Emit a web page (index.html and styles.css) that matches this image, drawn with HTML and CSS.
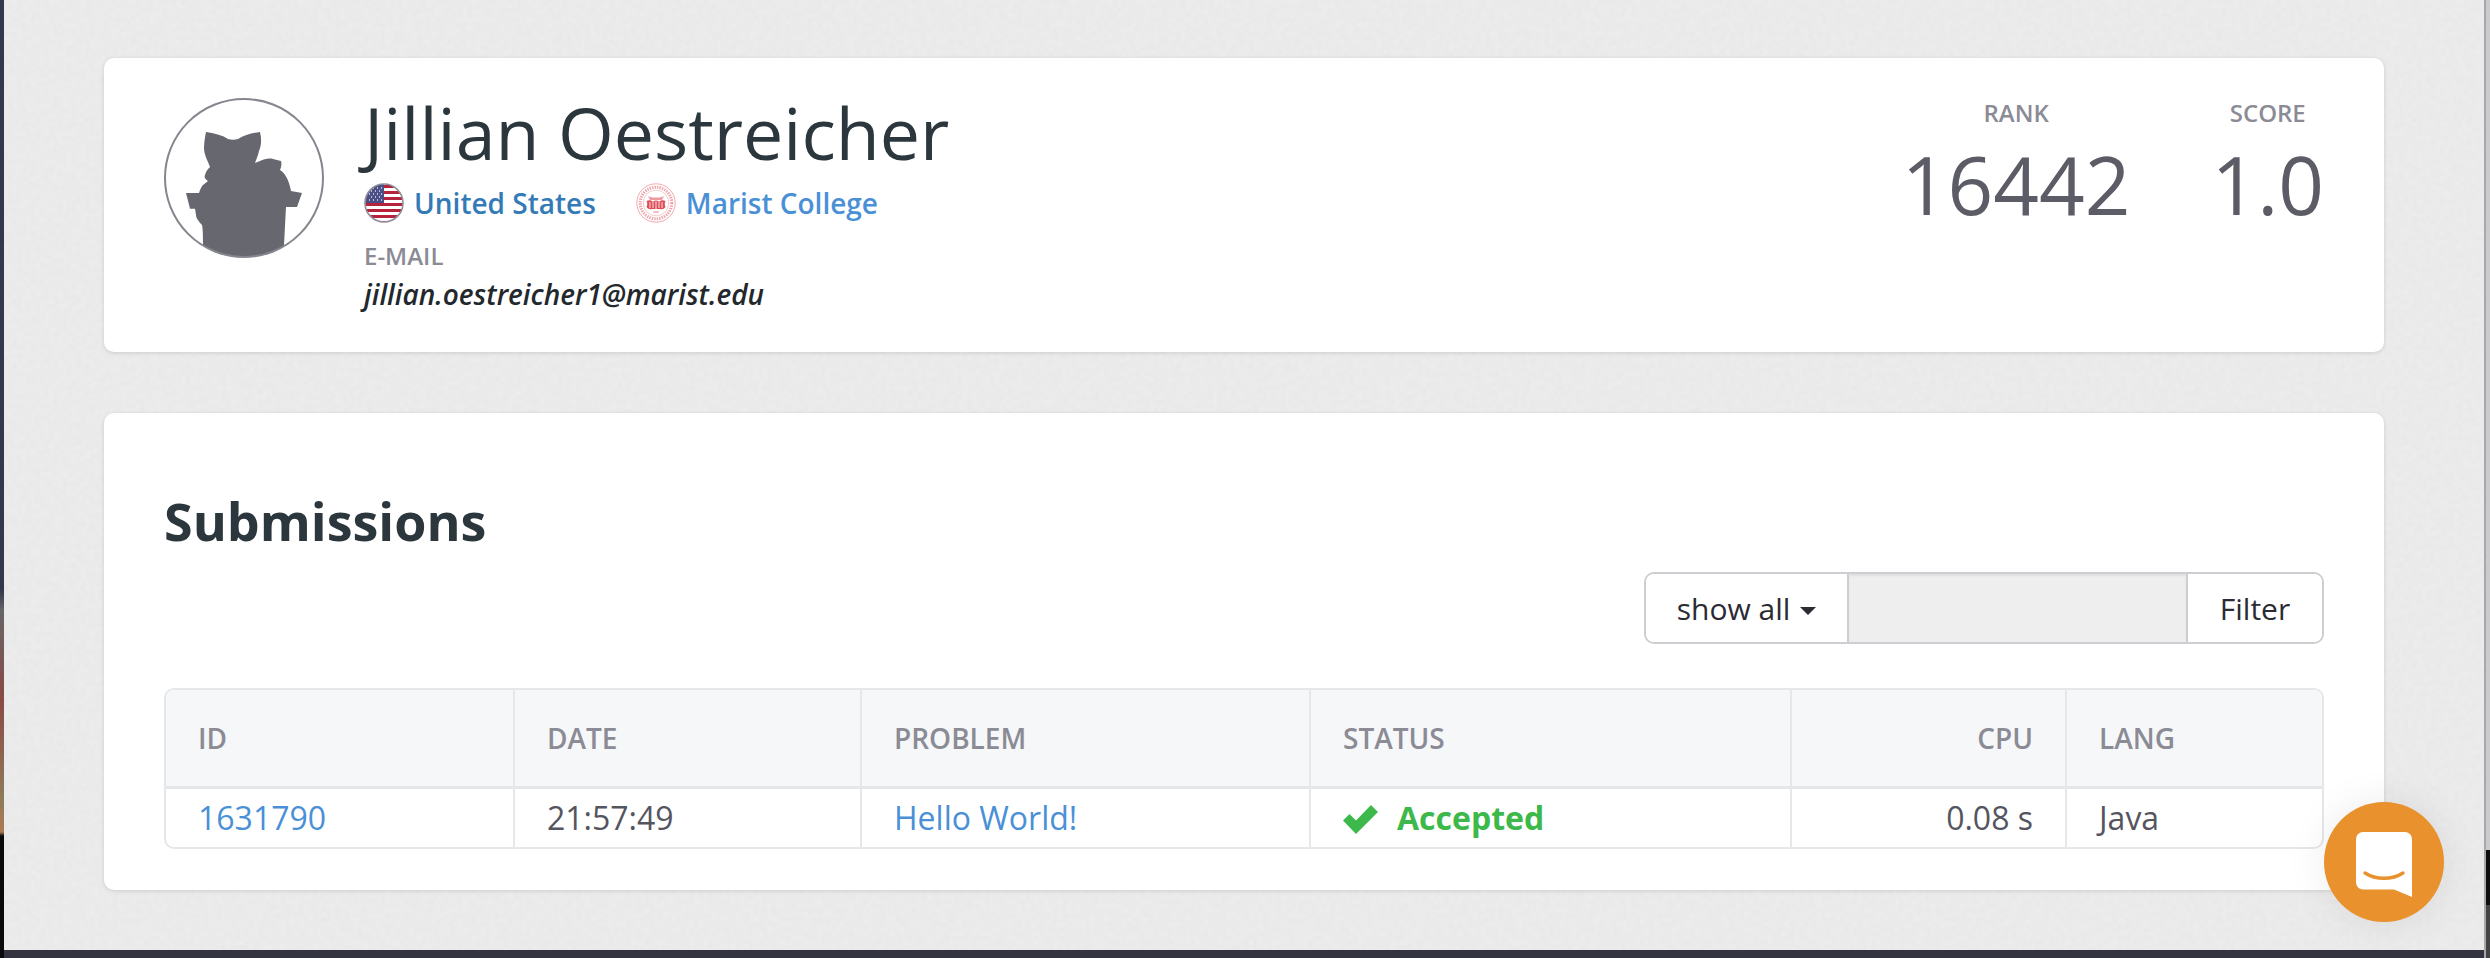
FILE: index.html
```html
<!DOCTYPE html>
<html lang="en">
<head>
<meta charset="utf-8">
<title>Jillian Oestreicher</title>
<link rel="stylesheet" href="styles.css">
</head>
<body>
<div class="screen">
  <div class="edge-left"></div>
  <main class="page">
    <svg class="grain" aria-hidden="true"><filter id="grain"><feTurbulence type="fractalNoise" baseFrequency="0.22" numOctaves="2" seed="4"/><feGaussianBlur stdDeviation="1"/><feColorMatrix values="0 0 0 0 0.6 0 0 0 0 0.6 0 0 0 0 0.6 0.3 0 0 0 -0.1"/></filter><rect width="100%" height="100%" filter="url(#grain)"/></svg>
    <section class="card profile">
      <div class="avatar">
        <svg viewBox="0 0 160 160" width="160" height="160">
          <defs><clipPath id="avatar-clip"><circle cx="80" cy="80" r="79"/></clipPath></defs>
          <g clip-path="url(#avatar-clip)">
            <path class="cat" d="M42 34C50 35 58 37 64 41C67 42 71 42 74 41C80 37 88 35 96 34C98 42 97 49 95 53C94 58 92 62 91 65L96 63C100 61 105 60 109 61L117 63C118 66 117 70 116 72C121 75 125 82 127 93L138 95L133 109H122L120 147L125 165H36L39 147C39 140 39 132 38 127C35 124 32 120 32 117L31 110.700H26L22 95H35C36 91 38 88 39 87L44 83C41 81 40 79 41 77C42 73 44 71 46 69C44 63 40 57 40 50C40 45 41 39 42 34Z"/>
          </g>
          <circle class="ring" cx="80" cy="80" r="79"/>
        </svg>
      </div>
      <div class="identity">
        <h1 class="name">Jillian Oestreicher</h1>
        <div class="affiliations">
          <a class="affiliation country">
            <svg class="badge" viewBox="0 0 40 40" width="40" height="40">
              <defs><clipPath id="flag-clip"><circle cx="20" cy="20" r="19"/></clipPath></defs>
              <g clip-path="url(#flag-clip)">
                <rect width="40" height="40" fill="#fff"/>
                <path class="stripe" d="M0 2h40v3H0zM0 8h40v3H0zM0 14h40v3H0zM0 20h40v3H0zM0 26h40v3H0zM0 32h40v3H0zM0 38h40v3H0z"/>
                <rect width="20" height="20" fill="#4a4f86"/>
                <path d="M5 5h1M9 5h1M13 5h1M17 5h1M7 8h1M11 8h1M15 8h1M5 11h1M9 11h1M13 11h1M17 11h1M7 14h1M11 14h1M15 14h1M5 17h1M9 17h1M13 17h1M17 17h1" stroke="#dfe0ee" stroke-width="1.6"/>
              </g>
              <circle cx="20" cy="20" r="19" fill="none" stroke="#8f8f99" stroke-width="1.6"/>
            </svg>
            <span>United States</span>
          </a>
          <a class="affiliation college">
            <svg class="badge" viewBox="0 0 40 40" width="40" height="40">
              <circle cx="20" cy="20" r="19.200" fill="#fff" stroke="#f1a9ad" stroke-width="1"/>
              <circle cx="20" cy="20" r="15.800" fill="none" stroke="#f0a3a8" stroke-width="3" stroke-dasharray="1.400 1.100"/>
              <circle cx="20" cy="20" r="12.800" fill="none" stroke="#f3b5b9" stroke-width=".7"/>
              <path d="M12 13C15 15 25 15 28 13L26 17H14Z" fill="#ef9aa0"/>
              <path d="M10.500 18C13 16.500 15.500 17 17 19C18 17 22 17 23 19C24.500 17 27 16.500 29.500 18C28.500 20 28.500 22 29.500 24C28 26 26 26.500 24 26H16C14 26.500 12 26 10.500 24C11.500 22 11.500 20 10.500 18Z" fill="#de4f5a"/>
              <path d="M14 19v6M17 19v6M20 18v8M23 19v6M26 19v6" stroke="#fff" stroke-width=".8"/>
              <path d="M17 29h6" stroke="#ef9aa0" stroke-width="1.200"/>
            </svg>
            <span>Marist College</span>
          </a>
        </div>
        <div class="field-label">E-MAIL</div>
        <div class="email">jillian.oestreicher1@marist.edu</div>
      </div>
      <div class="stats">
        <div class="stat stat-rank"><div class="stat-label">RANK</div><div class="stat-value">16442</div></div>
        <div class="stat stat-score"><div class="stat-label">SCORE</div><div class="stat-value">1.0</div></div>
      </div>
    </section>
    <section class="card submissions">
      <h2 class="title">Submissions</h2>
      <div class="filter-row">
        <div class="filter">
          <button class="filter-select">show all <i class="caret"></i></button>
          <div class="filter-input"></div>
          <button class="filter-button">Filter</button>
        </div>
      </div>
      <div class="table-wrap">
        <table class="table">
          <colgroup><col class="c-id"><col class="c-date"><col class="c-problem"><col class="c-status"><col class="c-cpu"><col class="c-lang"></colgroup>
          <thead><tr><th>ID</th><th>DATE</th><th>PROBLEM</th><th>STATUS</th><th class="num">CPU</th><th>LANG</th></tr></thead>
          <tbody><tr>
            <td><a class="link">1631790</a></td>
            <td>21:57:49</td>
            <td><a class="link">Hello World!</a></td>
            <td class="accepted"><svg class="check" viewBox="0 0 35 29" width="35" height="29"><path d="M0 15.500L6.500 9L13 15.500L28 0L35 7L13 29Z"/></svg>Accepted</td>
            <td class="num">0.08 s</td>
            <td>Java</td>
          </tr></tbody>
        </table>
      </div>
    </section>
    <button class="chat" aria-label="Chat">
      <svg viewBox="0 0 56 65" width="56" height="65">
        <path fill="#fff" d="M7 0H49A7 7 0 0 1 56 7V65L38 57.500H7A7 7 0 0 1 0 50.500V7A7 7 0 0 1 7 0Z"/>
        <path fill="none" stroke="#e8912d" stroke-width="3.400" stroke-linecap="round" d="M9 41C20 48 36 48 47 41"/>
      </svg>
    </button>
  </main>
  <div class="edge-right"></div>
  <div class="edge-bottom"></div>
</div>
</body>
</html>
```
FILE: styles.css
```css
* { box-sizing: border-box; }
html, body { margin: 0; height: 100%; overflow: hidden; }
body { font-family: "Open Sans", sans-serif; color: #2b373c; background: #33343f; }
.screen { width: 2490px; height: 958px; display: grid; grid-template-columns: 4px 1fr 6px; grid-template-rows: 950px 8px; }
.edge-left { grid-row: 1 / -1; background: linear-gradient(#33384e 0 590px, #666 610px, #8a4a45 700px, #8f7a5a 800px, #b07a50 832px, #0a0a0c 836px); }
.edge-right { grid-column: 3; grid-row: 1 / -1; background: linear-gradient(90deg, #a8a8a8 0 2px, transparent 2px), linear-gradient(#cbcbcd 0 850px, #0e0e0e 850px 905px, #444 905px); }
.edge-bottom { grid-column: 2; grid-row: 2; background: #33343f; }
.page { position: relative; background: #ececec; padding: 58px 100px 0; display: flex; flex-direction: column; gap: 61px; }
.grain { position: absolute; inset: 0; width: 100%; height: 100%; }
.card { position: relative; background: #fff; border-radius: 10px; box-shadow: 0 1px 4px rgba(0,0,0,.13); }
.profile { height: 294px; padding: 40px 60px; display: flex; }
.avatar { width: 160px; height: 160px; flex: none; }
.avatar svg { display: block; }
.cat { fill: #67686f; }
.ring { fill: none; stroke: #85858e; stroke-width: 2; }
.identity { margin-left: 40px; flex: 1; min-width: 0; }
.name { margin: 0; font-size: 71.700px; font-weight: 400; line-height: 69px; color: #2b373c; }
.affiliations { display: flex; gap: 40px; height: 42px; margin-top: 15px; align-items: center; }
.affiliation { display: flex; align-items: center; gap: 10px; font-size: 28px; font-weight: 600; }
.country { color: #337ab7; }
.college { color: #4a90d6; }
.stripe { fill: #b5233c; }
.badge { flex: none; }
.field-label { margin-top: 16px; font-size: 24px; line-height: 32px; font-weight: 600; color: #8b8b95; }
.email { margin-top: 2px; font-size: 28px; line-height: 40px; font-style: italic; font-weight: 600; color: #22282c; }
.stats { display: flex; gap: 81px; }
.stat { text-align: center; }
.stat-label { font-size: 24px; line-height: 30px; font-weight: 600; color: #8b8b95; }
.stat-value { font-size: 80px; line-height: 100px; font-weight: 400; color: #5c5c66; margin-top: 6px; }
.submissions { height: 477px; padding: 0 60px; }
.title { margin: 0; padding-top: 76px; font-size: 52px; line-height: 64px; font-weight: 700; color: #2b373c; }
.filter-row { display: flex; justify-content: flex-end; margin-top: 19px; }
.filter { width: 680px; height: 72px; display: flex; border: 2px solid #ccced1; border-radius: 10px; overflow: hidden; background: #fff; }
.filter-select, .filter-button { font: inherit; font-size: 30px; color: #2b2b33; background: #fff; border: 0; padding: 0; }
.filter-select { width: 201px; }
.filter-input { flex: 1; background: #eeeeee; border-left: 2px solid #ccced1; border-right: 2px solid #ccced1; box-shadow: inset 0 2px 2px rgba(0,0,0,.06); }
.filter-button { width: 134px; }
.caret { display: inline-block; width: 0; height: 0; border-style: solid; border-width: 8px 8px 0; border-color: #2b2b33 transparent transparent; vertical-align: middle; margin-left: 2px; }
.table-wrap { margin-top: 44px; border: 2px solid #e6e7e9; border-radius: 10px; overflow: hidden; }
.table { width: 100%; border-collapse: collapse; table-layout: fixed; }
.c-id { width: 348px; } .c-date { width: 347px; } .c-problem { width: 449px; } .c-status { width: 481px; } .c-cpu { width: 275px; } .c-lang { width: auto; }
th, td { padding: 0 32px; border-left: 2px solid #e6e7e9; text-align: left; }
th:first-child, td:first-child { border-left: 0; }
th { height: 97px; background: #f6f7f9; border-bottom: 3px solid #e6e7e9; font-size: 28px; font-weight: 600; color: #8b8b95; }
td { height: 60px; font-size: 32px; color: #55555f; }
th.num, td.num { text-align: right; }
.link { color: #4a90d6; }
.accepted { color: #3cb94a; font-weight: 700; }
.check { vertical-align: -4px; margin-right: 19px; fill: #3cb94a; }
.chat { position: absolute; left: 2320px; top: 802px; width: 120px; height: 120px; border: 0; border-radius: 50%; padding: 0; background: #e8912d; display: flex; align-items: center; justify-content: center; box-shadow: 0 0 40px rgba(0,0,0,.08); }
.chat svg { margin-top: 5px; }
```
